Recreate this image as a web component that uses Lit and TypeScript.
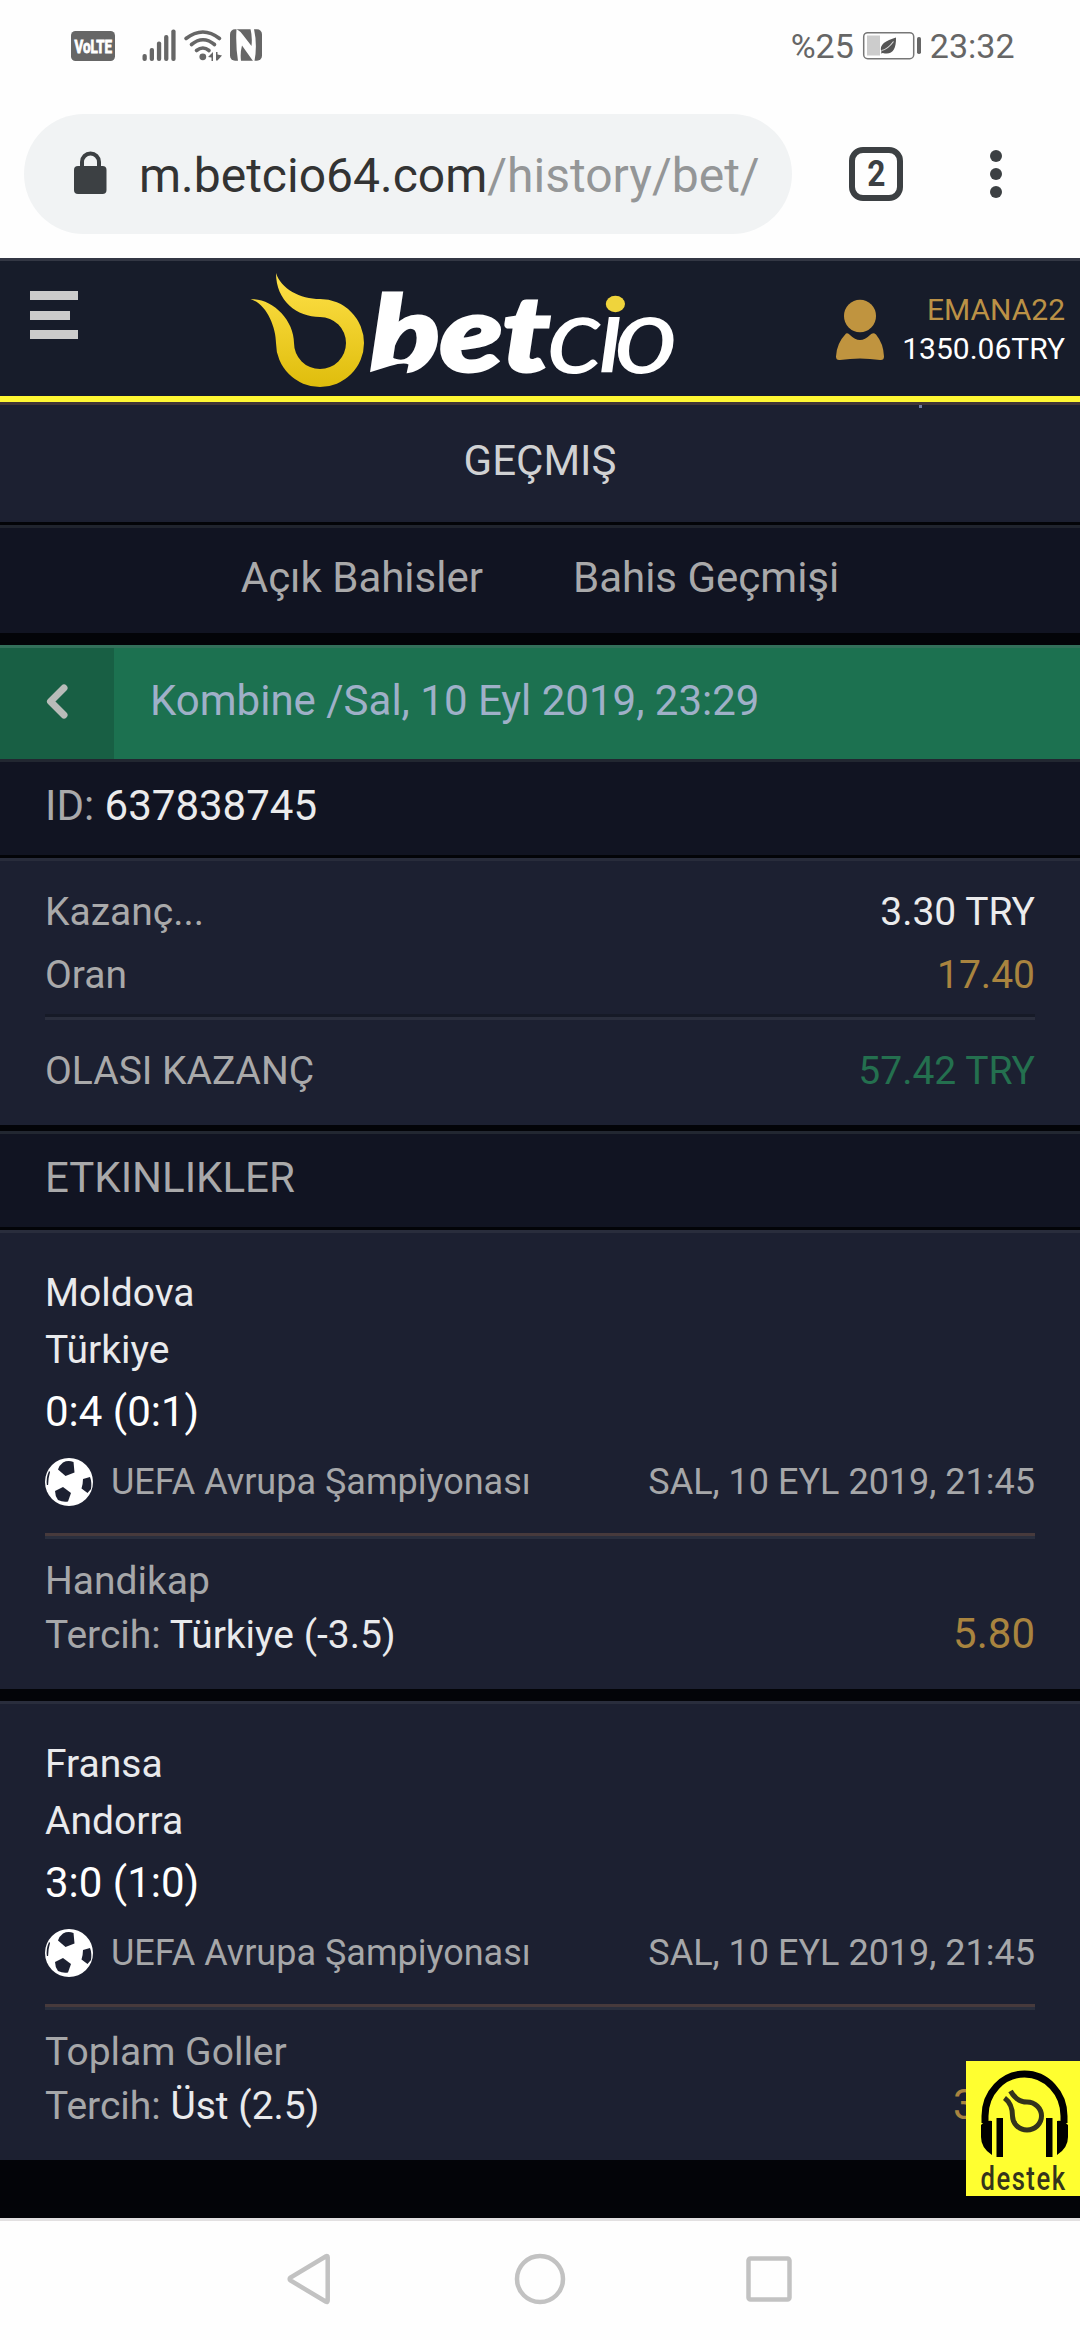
import { LitElement, html, css, svg } from "lit";
import { customElement, property } from "lit/decorators.js";

interface BetEvent {
  home: string;
  away: string;
  score: string;
  league: string;
  date: string;
  market: string;
  pick: string;
  odds: string;
}

const EVENTS: BetEvent[] = [
  {
    home: "Moldova",
    away: "Türkiye",
    score: "0:4 (0:1)",
    league: "UEFA Avrupa Şampiyonası",
    date: "SAL, 10 EYL 2019, 21:45",
    market: "Handikap",
    pick: "Türkiye (-3.5)",
    odds: "5.80",
  },
  {
    home: "Fransa",
    away: "Andorra",
    score: "3:0 (1:0)",
    league: "UEFA Avrupa Şampiyonası",
    date: "SAL, 10 EYL 2019, 21:45",
    market: "Toplam Goller",
    pick: "Üst (2.5)",
    odds: "3.00",
  },
];

@customElement("status-bar")
class StatusBar extends LitElement {
  static styles = css`
    :host {
      display: flex;
      height: 114px;
      background: #fefefe;
      justify-content: space-between;
      color: #666;
      font-size: 34px;
      line-height: 92px;
    }
    .left {
      display: block;
      margin-left: 71px;
      flex: none;
    }
    .right {
      display: flex;
      gap: 8px;
      margin-right: 65.5px;
    }
    .battery {
      margin-top: 31px;
      flex: none;
    }
    .volte {
      font: 700 19px Roboto, sans-serif;
      fill: #fff;
    }
  `;
  render() {
    return html`
      <svg class="left" width="200" height="92" viewBox="71 0 200 92" fill="#666">
        <rect x="71" y="31" width="44" height="30" rx="4.5" />
        <text class="volte" x="74.5" y="52.7" textLength="37.5" lengthAdjust="spacingAndGlyphs" stroke="#fff" stroke-width=".9">VoLTE</text>
        <rect x="142.500" y="54" width="4.300" height="7" rx="2" />
        <rect x="149.700" y="48" width="4.300" height="13" rx="2" />
        <rect x="156.900" y="41.500" width="4.300" height="19.500" rx="2" />
        <rect x="164.100" y="35" width="4.300" height="26" rx="2" />
        <rect x="171.300" y="29.500" width="4.300" height="31.500" rx="2" />
        <g fill="none" stroke="#666" stroke-width="3.6" stroke-linecap="round">
          <path d="M186 38.500Q203 25.500 219.500 38.500" />
          <path d="M191.500 44.500Q203 35 214.500 44.500" />
          <path d="M196.500 50.500Q203 45.500 209 50.500" />
        </g>
        <circle cx="202.800" cy="56.800" r="3.400" />
        <path d="M208 57l5-5v9h-1.500v-3.500zM216 52h1.500v2.500l4.500 1-4.500 5H216z" />
        <rect x="230" y="29.300" width="32" height="31.400" rx="5" />
        <path d="M236.500 29Q240 31 243 35L251.500 46Q252.500 37 250.500 29H254Q257.500 45 254.500 61H253L242 45.500Q240 53 241 61H238Q235.500 45 236.500 29z" fill="#fefefe" />
      </svg>
      <div class="right">
        <span>%25</span>
        <svg class="battery" width="60" height="30" viewBox="861 31 60 30">
          <rect x="862.700" y="32.700" width="50" height="26" rx="4" fill="#fff" stroke="#777" stroke-width="1.500" />
          <rect x="866" y="35.500" width="13" height="20" fill="#ccc" />
          <rect x="916" y="37" width="4" height="17" rx="1.800" fill="#666" />
          <path d="M895 37.500c-10 3-17.500 7-14.500 14.500l-.7 1.500 2-.6c9 2.600 13.500-3 13.200-15.400z" fill="#555" />
          <path d="M880.500 50.500q6-1 12-9" fill="none" stroke="#ddd" stroke-width="1.100" />
        </svg>
        <span>23:32</span>
      </div>
    `;
  }
}

@customElement("address-bar")
class AddressBar extends LitElement {
  static styles = css`
    :host {
      display: flex;
      align-items: flex-start;
      height: 144px;
      background: #fefefe;
      padding-left: 24px;
    }
    .pill {
      width: 768px;
      height: 120px;
      border-radius: 60px;
      background: #f1f3f4;
      display: flex;
      align-items: flex-start;
      box-sizing: border-box;
      padding-left: 50px;
    }
    .lock {
      margin-top: 37px;
    }
    .url {
      margin-left: 31px;
      font-size: 48px;
      line-height: 123px;
      white-space: nowrap;
      color: #333;
    }
    .path {
      color: #949697;
    }
    .tabs {
      margin: 33px 0 0 57px;
      box-sizing: border-box;
      width: 54px;
      height: 54px;
      border: 6px solid #3c4043;
      border-radius: 14px;
      text-align: center;
      font-weight: 700;
      font-size: 36px;
      line-height: 42px;
      color: #3c4043;
    }
    .count {
      display: inline-block;
      transform: scaleX(0.88);
    }
    .menu {
      margin: 36px 0 0 87px;
    }
  `;
  render() {
    return html`
      <div class="pill">
        <svg class="lock" width="34" height="44" viewBox="0 0 34 44">
          <path d="M8 17v-6a8.500 8.500 0 0 1 17 0v6" fill="none" stroke="#3c4043" stroke-width="4" />
          <rect x="0" y="15" width="32.500" height="28" rx="4" fill="#3c4043" />
        </svg>
        <div class="url">m.betcio64.com<span class="path">/history/bet/</span></div>
      </div>
      <div class="tabs"><span class="count">2</span></div>
      <svg class="menu" width="12" height="48" viewBox="0 0 12 48" fill="#3c4043">
        <circle cx="6" cy="6" r="6" /><circle cx="6" cy="24" r="6" /><circle cx="6" cy="42" r="6" />
      </svg>
    `;
  }
}

@customElement("site-header")
class SiteHeader extends LitElement {
  static styles = css`
    :host {
      display: flex;
      align-items: flex-start;
      box-sizing: border-box;
      height: 144px;
      border-top: 3px solid #333744;
      border-bottom: 6px solid #fff733;
      background: #171c2a;
    }
    .burger {
      display: flex;
      flex-direction: column;
      gap: 10.500px;
      margin: 30px 0 0 30px;
      width: 48px;
    }
    .bar {
      height: 9px;
      background: #cbcbcb;
    }
    .bar.short {
      width: 40px;
    }
    .logo {
      margin: 0 0 0 170px;
      flex: none;
      overflow: visible;
    }
    .bet {
      font: italic 900 105px Lato, sans-serif;
      fill: #fff;
      stroke: #fff;
      stroke-width: 3px;
    }
    .cio {
      font: italic 400 108px Lato, sans-serif;
      fill: #fff;
    }
    .user {
      margin: 38px 0 0 156px;
      flex: none;
    }
    .account {
      flex: 1;
      margin: 29px 15px 0 0;
      text-align: right;
      font-size: 30px;
      line-height: 39px;
      color: #fff;
    }
    .name {
      color: #bb9146;
    }
  `;
  render() {
    return html`
      <div class="burger">
        <div class="bar"></div>
        <div class="bar short"></div>
        <div class="bar"></div>
      </div>
      <svg class="logo" width="432" height="135" viewBox="248 261 432 135">
        <defs>
          <linearGradient id="gold" x1="0" y1="0" x2="0" y2="1">
            <stop offset="0" stop-color="#ffe148" />
            <stop offset="1" stop-color="#dfbd0c" />
          </linearGradient>
        </defs>
        <path
          fill="url(#gold)"
          d="M276 273C281 289 300 299 320 299A44 44 0 1 1 276 343C276 327 266 303 250.500 299.300C272 298 294 320 294 343A26 26 0 1 0 320 317C297 317 276 301 276 273Z"
        />
        <text class="bet" x="370" y="371" textLength="180" lengthAdjust="spacingAndGlyphs">bet</text>
        <path d="M366 373.500L390 366Q404 362 408.500 364.500L406 376H366Z" fill="#171c2a" />
        <g transform="translate(547 372.500) scale(1.15 1)">
          <text class="cio" x="0 43.500 58.500" y="0">cio</text>
        </g>
        <rect x="600" y="284" width="34" height="33" fill="#171c2a" />
        <ellipse cx="615.400" cy="304" rx="9.600" ry="8.200" fill="#efd43c" />
      </svg>
      <svg class="user" width="48" height="62" viewBox="836 299 48 62" fill="#c0943f">
        <ellipse cx="860" cy="316" rx="16" ry="16.300" />
        <path d="M846 333.500q2-1 4 1.500 10 10 20 0 3-3 6-.5 7.500 9 8 22 0 4-4 3.500-20-3-40 0-4 .5-4-3.500 .5-13 10-23z" />
      </svg>
      <div class="account">
        <div class="name">EMANA22</div>
        <div>1350.06TRY</div>
      </div>
    `;
  }
}

@customElement("bet-event")
class BetEventCard extends LitElement {
  @property({ attribute: false }) event!: BetEvent;

  static styles = css`
    :host {
      display: block;
      box-sizing: border-box;
      height: 459px;
      border-top: 3px solid #292d3c;
      background: #1c2031;
      padding: 32px 45px 0;
      font-size: 39px;
      color: #e9eaec;
    }
    .team {
      line-height: 57px;
    }
    .score {
      font-size: 42px;
      line-height: 65px;
      color: #fff;
    }
    .league {
      display: flex;
      align-items: center;
      height: 48px;
      margin-top: 14px;
      font-size: 36px;
      color: #a6a7a9;
    }
    .ball {
      margin-right: 18px;
    }
    .date {
      margin-left: auto;
    }
    .rule {
      margin: 27px 0 15px;
      height: 3px;
      background: #473a3c;
      border-bottom: 3px solid #2a2f3e;
    }
    .muted {
      color: #a6a7a9;
    }
    .line {
      display: flex;
      justify-content: space-between;
      align-items: baseline;
      height: 54px;
      line-height: 54px;
    }
    .odds {
      font-size: 42px;
      line-height: 50px;
      color: #a9843f;
    }
  `;
  render() {
    const e = this.event;
    return html`
      <div class="team">${e.home}</div>
      <div class="team">${e.away}</div>
      <div class="score">${e.score}</div>
      <div class="league">
        <svg class="ball" width="48" height="48" viewBox="0 0 48 48">
          <circle cx="24" cy="24" r="24" fill="#fff" />
          <g fill="#1c2031">
            <path d="M18 4.500Q23 2 28.500 4l1 10.500-9 3.500-7.500-6.500Q14 7.500 18 4.500z" />
            <path d="M10 33l8-4 8 6-3 8.500q-5 1-10-1.500-3-4-3-9z" />
            <path d="M38 21l7-2q2 5 1 12l-3.500 4-6-4.500q1.500-5 1.500-9.500z" />
            <path d="M4.500 13.500Q1.500 20 2.500 27Q2.500 20 4.500 13.500z" stroke="#1c2031" stroke-width="1.200" />
          </g>
        </svg>
        <span>${e.league}</span>
        <span class="date">${e.date}</span>
      </div>
      <div class="rule"></div>
      <div class="line muted">${e.market}</div>
      <div class="line">
        <span><span class="muted">Tercih:</span> ${e.pick}</span>
        <span class="odds">${e.odds}</span>
      </div>
    `;
  }
}

@customElement("support-badge")
class SupportBadge extends LitElement {
  static styles = css`
    :host {
      position: absolute;
      right: 0;
      top: 2061px;
      width: 114px;
      height: 135px;
      background: #ffff30;
    }
    .art {
      display: block;
      overflow: visible;
    }
    .label {
      font: 500 34px Roboto, sans-serif;
      fill: #34341c;
      letter-spacing: 2px;
    }
  `;
  render() {
    return html`
      <svg class="art" width="114" height="135" viewBox="0 0 114 135">
        <path d="M19 62V55a39.500 42 0 0 1 79 0v7" fill="none" stroke="#000" stroke-width="7" />
        <path d="M26 60V94Q15 87 15 76V64Q20 59 26 60zM91 60V94Q102 87 102 76V64Q97 59 91 60z" />
        <rect x="30.500" y="57" width="6.500" height="39" />
        <rect x="80" y="57" width="6.500" height="39" />
        <path
          d="M44.500 30C49 38 55 41 61 41A14.500 14 0 1 1 46.500 55C46.500 48 44 41 38.500 37"
          fill="none" stroke="#34341c" stroke-width="5" stroke-linejoin="round"
        />
        <text class="label" x="14.500" y="129" textLength="86" lengthAdjust="spacingAndGlyphs">destek</text>
      </svg>
    `;
  }
}

@customElement("nav-bar")
class NavBar extends LitElement {
  static styles = css`
    :host {
      display: flex;
      box-sizing: border-box;
      height: 122px;
      border-top: 3px solid #e2e0e1;
      background: #fefefe;
      justify-content: center;
      align-items: flex-start;
      padding-top: 32px;
    }
    .icons {
      display: grid;
      grid-template-columns: repeat(3, 52px);
      gap: 178px;
    }
  `;
  render() {
    const shapes = [
      svg`<path d="M43.700 4.500V47.500Q43.700 49.500 42 48.700L6.500 27.500Q4.800 26 6.500 24.500L42 3.300Q43.700 2.500 43.700 4.500Z" />`,
      svg`<circle cx="26" cy="26" r="23" />`,
      svg`<rect x="4.500" y="5.500" width="41" height="41" rx="2" />`,
    ];
    return html`<div class="icons">
      ${shapes.map(
        (s) => html`<svg width="52" height="52" viewBox="0 0 52 52" fill="none" stroke="#c2c2c2" stroke-width="4.500" overflow="visible">${s}</svg>`
      )}
    </div>`;
  }
}

@customElement("app-root")
class AppRoot extends LitElement {
  static styles = css`
    :host {
      display: block;
      position: relative;
      width: 1080px;
      height: 2340px;
      overflow: hidden;
      background: #030408;
      font-family: Roboto, sans-serif;
      color: #a9a9aa;
    }
    .title {
      box-sizing: border-box;
      height: 120px;
      border-top: 3px solid #413537;
      background: #1c2031;
      text-align: center;
      font-size: 42px;
      line-height: 111px;
      color: #d0d1d3;
      position: relative;
    }
    .speck {
      position: absolute;
      left: 919px;
      top: 0;
      width: 3px;
      height: 3px;
      background: #6f7aa0;
    }
    .tabs {
      display: flex;
      justify-content: center;
      gap: 90px;
      height: 105px;
      margin-top: 3px;
      border-top: 3px solid #20242e;
      background: #111422;
      font-size: 42px;
      line-height: 99px;
    }
    .coupon {
      display: flex;
      height: 111px;
      margin-top: 12px;
      border-top: 3px solid #33705a;
      background: #1c7150;
      font-size: 42px;
      line-height: 105px;
      color: #9fb0c8;
    }
    .back {
      width: 114px;
      background: #185f44;
      margin-right: 36px;
      display: flex;
      align-items: flex-start;
      box-sizing: border-box;
      padding: 36px 0 0 46px;
    }
    .strip {
      height: 93px;
      border-top: 3px solid #222731;
      border-bottom: 3px solid #030408;
      background: #111422;
      padding-left: 45px;
      font-size: 42px;
      line-height: 87px;
    }
    .bright {
      color: #ebebec;
    }
    .summary {
      box-sizing: border-box;
      height: 267px;
      border-top: 3px solid #282c3b;
      background: #1c2031;
      padding: 20px 45px 0;
      margin-bottom: 6px;
      font-size: 39px;
    }
    .row {
      display: flex;
      justify-content: space-between;
      line-height: 63px;
    }
    .rule {
      height: 3px;
      margin-top: 7px;
      background: #161a27;
      border-bottom: 3px solid #2a2e3d;
    }
    .row.total {
      line-height: 103px;
    }
    .gold {
      color: #a9843f;
    }
    .green {
      color: #24704f;
    }
    .events {
      display: flex;
      flex-direction: column;
      gap: 12px;
      margin-bottom: 58px;
    }
  `;
  render() {
    return html`
      <status-bar></status-bar>
      <address-bar></address-bar>
      <site-header></site-header>
      <div class="title">GEÇMIŞ<span class="speck"></span></div>
      <div class="tabs"><span>Açık Bahisler</span><span>Bahis Geçmişi</span></div>
      <div class="coupon">
        <div class="back">
          <svg width="24" height="36" viewBox="0 0 24 36">
            <path d="M18 4L4.500 17.500 18 31" fill="none" stroke="#b9bcb9" stroke-width="7" stroke-linecap="round" stroke-linejoin="round" />
          </svg>
        </div>
        <span>Kombine /Sal, 10 Eyl 2019, 23:29</span>
      </div>
      <div class="strip">ID: <span class="bright">637838745</span></div>
      <div class="summary">
        <div class="row"><span>Kazanç...</span><span class="bright">3.30 TRY</span></div>
        <div class="row"><span>Oran</span><span class="gold">17.40</span></div>
        <div class="rule"></div>
        <div class="row total"><span>OLASI KAZANÇ</span><span class="green">57.42 TRY</span></div>
      </div>
      <div class="strip">ETKINLIKLER</div>
      <div class="events">${EVENTS.map((e) => html`<bet-event .event=${e}></bet-event>`)}</div>
      <nav-bar></nav-bar>
      <support-badge></support-badge>
    `;
  }
}
